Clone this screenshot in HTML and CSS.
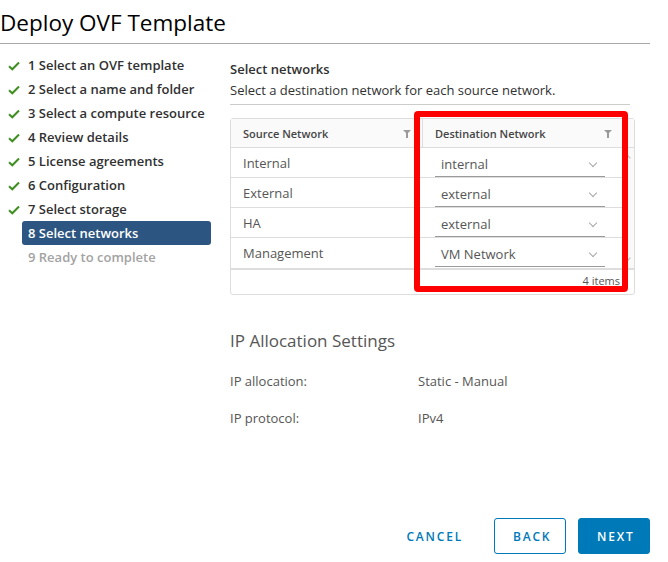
FILE: index.html
```html
<!DOCTYPE html>
<html lang="en">
<head>
  <meta charset="UTF-8">
  <title>Deploy OVF Template</title>
  <link rel="stylesheet" href="styles.css">
</head>
<body>

  <div class="wizard">
    <h1 class="title">Deploy OVF Template</h1>

    <div class="main">
      <ul class="steps">
        <li class="done"><svg class="check" viewBox="0 0 12 10"><path d="M1 5.2 L4.3 8.3 L11 1.5" /></svg>1 Select an OVF template</li>
        <li class="done"><svg class="check" viewBox="0 0 12 10"><path d="M1 5.2 L4.3 8.3 L11 1.5" /></svg>2 Select a name and folder</li>
        <li class="done"><svg class="check" viewBox="0 0 12 10"><path d="M1 5.2 L4.3 8.3 L11 1.5" /></svg>3 Select a compute resource</li>
        <li class="done"><svg class="check" viewBox="0 0 12 10"><path d="M1 5.2 L4.3 8.3 L11 1.5" /></svg>4 Review details</li>
        <li class="done"><svg class="check" viewBox="0 0 12 10"><path d="M1 5.2 L4.3 8.3 L11 1.5" /></svg>5 License agreements</li>
        <li class="done"><svg class="check" viewBox="0 0 12 10"><path d="M1 5.2 L4.3 8.3 L11 1.5" /></svg>6 Configuration</li>
        <li class="done"><svg class="check" viewBox="0 0 12 10"><path d="M1 5.2 L4.3 8.3 L11 1.5" /></svg>7 Select storage</li>
        <li class="active">8 Select networks</li>
        <li class="todo">9 Ready to complete</li>
      </ul>

      <div class="content">
        <h2 class="step-title">Select networks</h2>
        <p class="step-desc">Select a destination network for each source network.</p>

        <div class="grid-wrap">
          <div class="grid">
            <div class="grid-head">
              <div class="cell head-cell">Source Network <span class="filter"></span></div>
              <div class="cell head-cell">Destination Network <span class="filter"></span></div>
              <div class="head-spacer"></div>
            </div>
            <div class="grid-body">
              <div class="rows">
                <div class="row">
                  <div class="cell">Internal</div>
                  <div class="cell"><div class="select">internal<span class="chev"></span></div></div>
                </div>
                <div class="row">
                  <div class="cell">External</div>
                  <div class="cell"><div class="select">external<span class="chev"></span></div></div>
                </div>
                <div class="row">
                  <div class="cell">HA</div>
                  <div class="cell"><div class="select">external<span class="chev"></span></div></div>
                </div>
                <div class="row">
                  <div class="cell">Management</div>
                  <div class="cell"><div class="select">VM Network<span class="chev"></span></div></div>
                </div>
              </div>
              <div class="scrollbar">
                <span class="arrow up"></span>
                <span class="arrow down"></span>
              </div>
            </div>
            <div class="grid-foot">4 items</div>
          </div>
          <div class="highlight"></div>
        </div>

        <h3 class="section-title">IP Allocation Settings</h3>
        <div class="prop">
          <span class="prop-label">IP allocation:</span>
          <span class="prop-value">Static - Manual</span>
        </div>
        <div class="prop">
          <span class="prop-label">IP protocol:</span>
          <span class="prop-value">IPv4</span>
        </div>
      </div>
    </div>

    <div class="footer">
      <button class="btn btn-link">Cancel</button>
      <button class="btn btn-outline">Back</button>
      <button class="btn btn-primary">Next</button>
    </div>
  </div>

</body>
</html>
```

FILE: styles.css
```css
body {
  margin: 0;
  background: #fff;
  color: #565656;
  font-family: 'Open Sans', 'Lato', sans-serif;
  font-size: 13px;
}

.wizard {
  width: 650px;
  height: 562px;
  display: flex;
  flex-direction: column;
}

.title {
  margin: 0;
  height: 43px;
  line-height: 46px;
  font-size: 22.5px;
  font-weight: 400;
  color: #000;
  border-bottom: 1px solid #a8a8a8;
}

.main {
  display: flex;
  flex: 1;
}

/* left step list */
.steps {
  list-style: none;
  margin: 0;
  padding: 9px 0 0 0;
  width: 230px;
}

.steps li {
  height: 24px;
  line-height: 24px;
  padding-left: 28px;
  margin-right: 19px;
  font-weight: 600;
  color: #313131;
  position: relative;
  white-space: nowrap;
}

.steps .check {
  position: absolute;
  left: 8px;
  top: 8px;
  width: 12px;
  height: 10px;
  fill: none;
  stroke: #3f8f1f;
  stroke-width: 2;
}

.steps .active {
  margin-left: 22px;
  padding-left: 6px;
  background: #2d5582;
  color: #fff;
  border-radius: 3px;
}

.steps .todo {
  color: #a3a3a3;
}

/* right content */
.content {
  flex: 1;
  padding-top: 15px;
}

.step-title {
  margin: 0;
  font-size: 13px;
  font-weight: 600;
  color: #313131;
  line-height: 20px;
}

.step-desc {
  margin: 0;
  width: 400px;
  line-height: 22px;
  padding-bottom: 3px;
  color: #313131;
  border-bottom: 1px solid #ccc;
}

.grid-wrap {
  position: relative;
  margin-top: 13px;
  width: 405px;
}

.grid {
  border: 1px solid #ddd;
  border-radius: 3px;
  background: #fff;
}

.grid-head {
  display: flex;
  height: 29px;
  box-sizing: border-box;
  background: #fafafa;
  border-bottom: 1px solid #ddd;
}

.cell {
  display: flex;
  align-items: center;
  box-sizing: border-box;
  padding-left: 12px;
  color: #565656;
}

.cell:first-child {
  width: 192px;
}

.cell:nth-child(2) {
  flex: 1;
}

.head-cell {
  position: relative;
  font-size: 11px;
  font-weight: 600;
  color: #454545;
}

.head-cell:first-child {
  border-right: 1px solid #ddd;
}

.head-spacer {
  width: 11px;
}

.filter {
  position: absolute;
  right: 11px;
  top: 11px;
  width: 0;
  height: 0;
  border-left: 4px solid transparent;
  border-right: 4px solid transparent;
  border-top: 4px solid #9a9a9a;
}

.filter::after {
  content: "";
  position: absolute;
  left: -1px;
  top: -1px;
  width: 2px;
  height: 5px;
  background: #9a9a9a;
}

.grid-body {
  display: flex;
  border-bottom: 2px solid #ddd;
}

.rows {
  flex: 1;
}

.row {
  display: flex;
  height: 30px;
  box-sizing: border-box;
  border-bottom: 1px solid #ddd;
}

.row:last-child {
  border-bottom: none;
}

.select {
  position: relative;
  width: 170px;
  height: 26px;
  line-height: 26px;
  margin-top: 2px;
  padding-left: 6px;
  box-sizing: border-box;
  border-bottom: 1px solid #9a9a9a;
  color: #565656;
}

.chev {
  position: absolute;
  right: 9px;
  top: 9px;
  width: 5px;
  height: 5px;
  border-right: 1px solid #a8a8a8;
  border-bottom: 1px solid #a8a8a8;
  transform: rotate(45deg);
}

.scrollbar {
  width: 11px;
  position: relative;
  background: #f9f9f9;
}

.arrow {
  position: absolute;
  left: 3px;
  width: 3px;
  height: 3px;
  border-left: 1px solid #bbb;
  border-top: 1px solid #bbb;
}

.arrow.up {
  top: 8px;
  transform: rotate(45deg);
}

.arrow.down {
  bottom: 8px;
  transform: rotate(225deg);
}

.grid-foot {
  height: 24px;
  line-height: 22px;
  text-align: right;
  padding-right: 14px;
  font-size: 11px;
  color: #565656;
}

/* annotation box drawn on top of the grid */
.highlight {
  position: absolute;
  left: 184px;
  top: -7px;
  width: 202px;
  height: 169px;
  border: 6px solid #ff0000;
  border-radius: 4px;
}

.section-title {
  margin: 35px 0 0 0;
  font-size: 17px;
  font-weight: 400;
  color: #565656;
  line-height: 22px;
}

.prop {
  display: flex;
  margin-top: 19px;
  line-height: 20px;
}

.prop + .prop {
  margin-top: 17px;
}

.prop-label {
  width: 188px;
}

/* bottom buttons */
.footer {
  display: flex;
  justify-content: flex-end;
  gap: 12px;
  padding-bottom: 8px;
}

.btn {
  height: 36px;
  padding: 0 18px;
  font-family: inherit;
  font-size: 12px;
  font-weight: 600;
  letter-spacing: 1.8px;
  text-transform: uppercase;
  border-radius: 3px;
  border: 1px solid #0079b8;
  cursor: pointer;
}

.btn-link {
  border-color: transparent;
  background: none;
  color: #0079b8;
}

.btn-outline {
  background: #fff;
  color: #0079b8;
  width: 72px;
}

.btn-primary {
  background: #0079b8;
  color: #fff;
  width: 72px;
}
```
